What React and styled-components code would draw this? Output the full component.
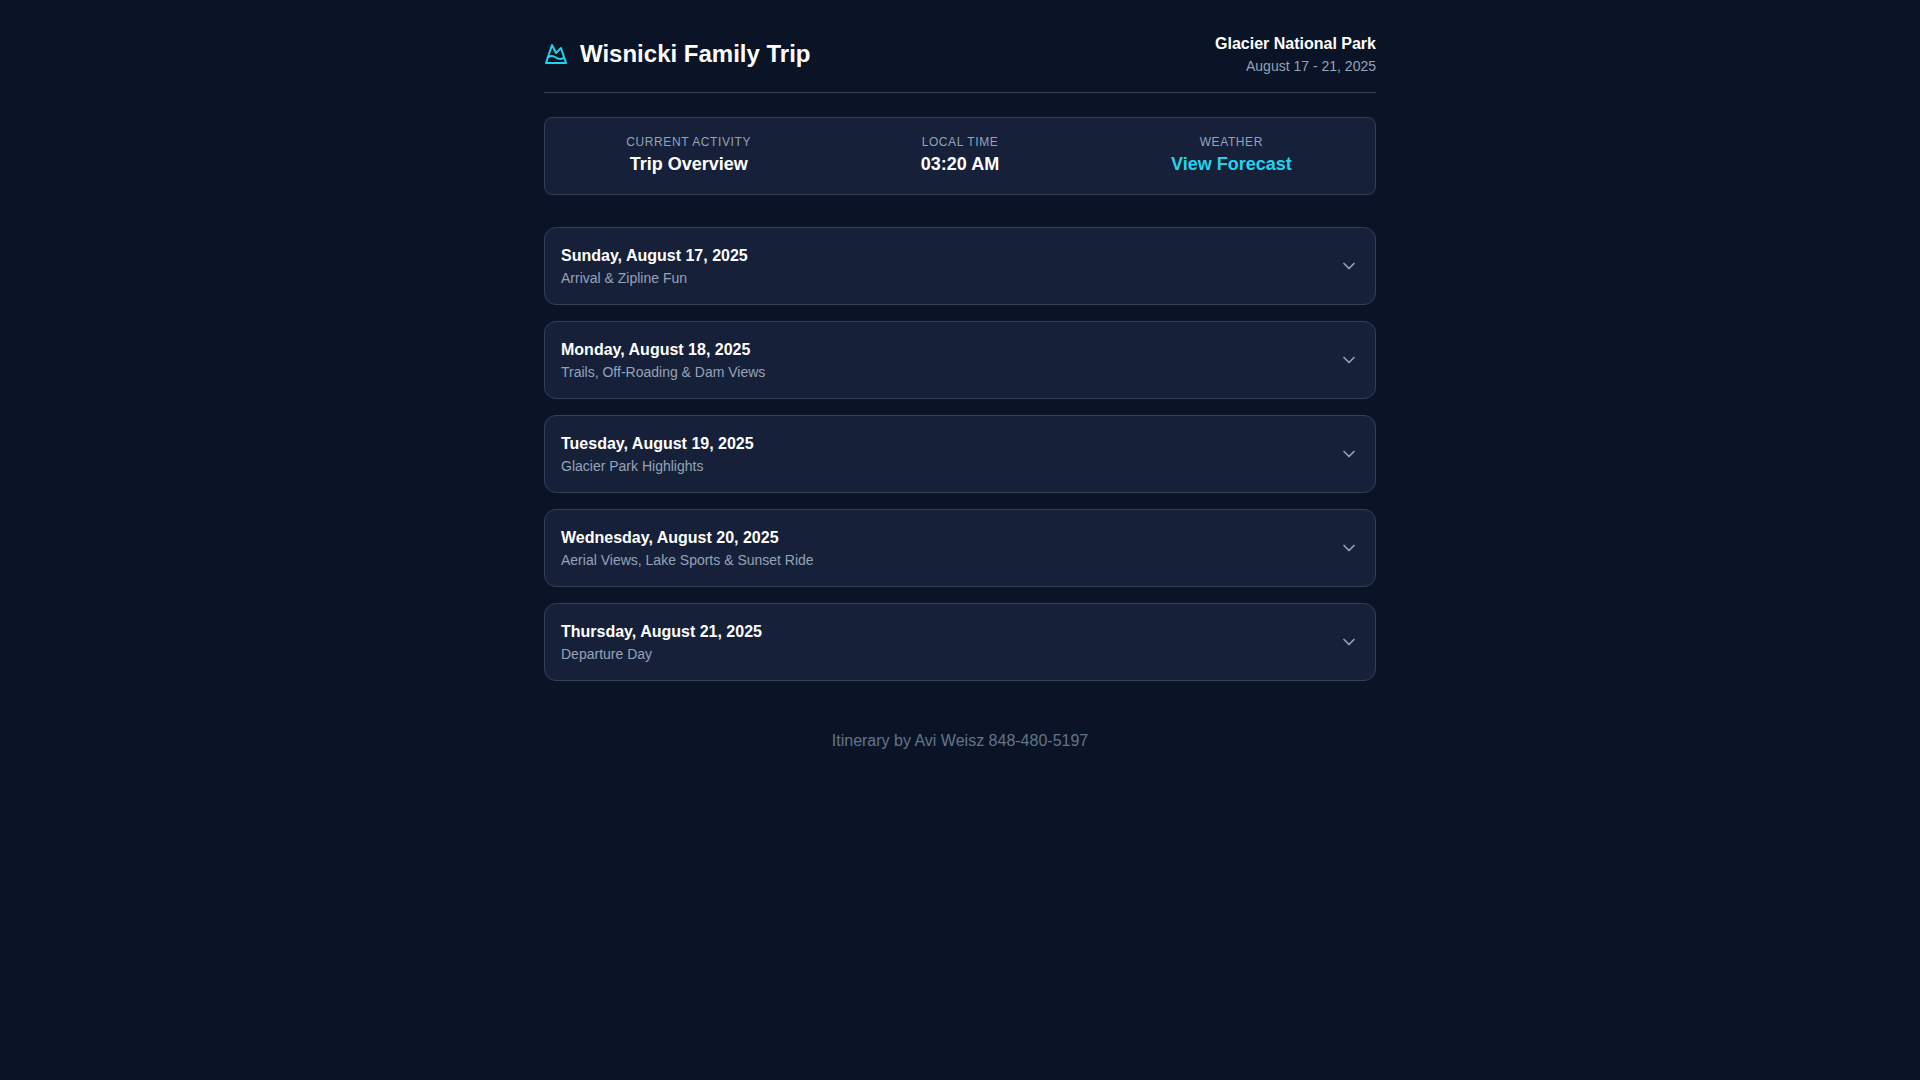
import { useState } from 'react'
import styled, { createGlobalStyle } from 'styled-components'
import { ChevronDown, MountainSnow } from 'lucide-react'

const GlobalStyle = createGlobalStyle`
  *, *::before, *::after {
    box-sizing: border-box;
  }

  body {
    margin: 0;
    background: #0a1426;
    color: #fff;
    font-family: "Liberation Sans", Arial, sans-serif;
    font-size: 16px;
    line-height: 24px;
  }

  h1, h2, p {
    margin: 0;
  }
`

const Container = styled.div`
  max-width: 896px;
  margin: 0 auto;
  padding: 32px;
`

const Header = styled.header`
  display: flex;
  justify-content: space-between;
  align-items: center;
  padding-bottom: 16px;
  margin-bottom: 24px;
  border-bottom: 1px solid #334155;
`

const Brand = styled.div`
  display: flex;
  align-items: center;
  gap: 12px;
  color: #22d3ee;
`

const Title = styled.h1`
  color: #fff;
  font-size: 24px;
  line-height: 32px;
  font-weight: 700;
`

const Place = styled.div`
  text-align: right;
`

const Strong = styled.p`
  font-weight: 600;
`

const Muted = styled.p`
  color: #94a3b8;
  font-size: 14px;
  line-height: 20px;
`

const StatusBar = styled.section`
  display: grid;
  grid-template-columns: repeat(3, 1fr);
  gap: 16px;
  padding: 16px;
  margin-bottom: 32px;
  text-align: center;
  background: #172039;
  border: 1px solid #334155;
  border-radius: 8px;
`

const StatusLabel = styled.p`
  color: #94a3b8;
  font-size: 12px;
  line-height: 16px;
  letter-spacing: 0.05em;
  text-transform: uppercase;
`

const StatusValue = styled.p`
  font-size: 18px;
  line-height: 28px;
  font-weight: 600;
`

const ForecastLink = styled.a`
  color: #22d3ee;
  text-decoration: none;

  &:hover {
    text-decoration: underline;
  }
`

const Days = styled.main`
  display: flex;
  flex-direction: column;
  gap: 16px;
`

const DayCard = styled.section`
  background: #172039;
  border: 1px solid #334155;
  border-radius: 12px;
  overflow: hidden;
`

const DayButton = styled.button`
  display: flex;
  justify-content: space-between;
  align-items: center;
  width: 100%;
  padding: 16px;
  border: 0;
  background: transparent;
  color: #94a3b8;
  font: inherit;
  text-align: left;
  cursor: pointer;

  svg {
    flex-shrink: 0;
    transform: ${({ $open }) => ($open ? 'rotate(180deg)' : 'none')};
  }
`

const DayDate = styled.span`
  display: block;
  color: #fff;
  font-weight: 700;
`

const DayTitle = styled.span`
  display: block;
  font-size: 14px;
  line-height: 20px;
`

const DayBody = styled.p`
  padding: 0 16px 16px;
  color: #94a3b8;
`

const Footer = styled.footer`
  margin-top: 48px;
  text-align: center;
  color: #64748b;
`

const days = [
  { date: 'Sunday, August 17, 2025', title: 'Arrival & Zipline Fun' },
  { date: 'Monday, August 18, 2025', title: 'Trails, Off-Roading & Dam Views' },
  { date: 'Tuesday, August 19, 2025', title: 'Glacier Park Highlights' },
  { date: 'Wednesday, August 20, 2025', title: 'Aerial Views, Lake Sports & Sunset Ride' },
  { date: 'Thursday, August 21, 2025', title: 'Departure Day' },
]

const App = () => {
  const [openDay, setOpenDay] = useState(null)

  const toggleDay = (i) => {
    setOpenDay(openDay === i ? null : i)
  }

  return (
    <>
      <GlobalStyle />
      <Container>
        <Header>
          <Brand>
            <MountainSnow size={24} />
            <Title>Wisnicki Family Trip</Title>
          </Brand>
          <Place>
            <Strong>Glacier National Park</Strong>
            <Muted>August 17 - 21, 2025</Muted>
          </Place>
        </Header>
        <StatusBar>
          <div>
            <StatusLabel>Current Activity</StatusLabel>
            <StatusValue>Trip Overview</StatusValue>
          </div>
          <div>
            <StatusLabel>Local Time</StatusLabel>
            <StatusValue>03:20 AM</StatusValue>
          </div>
          <div>
            <StatusLabel>Weather</StatusLabel>
            <StatusValue>
              <ForecastLink href="#forecast">View Forecast</ForecastLink>
            </StatusValue>
          </div>
        </StatusBar>
        <Days>
          {days.map((day, i) => (
            <DayCard key={day.date}>
              <DayButton
                type="button"
                $open={openDay === i}
                aria-expanded={openDay === i}
                onClick={() => toggleDay(i)}
              >
                <span>
                  <DayDate>{day.date}</DayDate>
                  <DayTitle>{day.title}</DayTitle>
                </span>
                <ChevronDown size={20} />
              </DayButton>
              {openDay === i && <DayBody>{day.title}</DayBody>}
            </DayCard>
          ))}
        </Days>
        <Footer>Itinerary by Avi Weisz 848-480-5197</Footer>
      </Container>
    </>
  )
}

export default App
